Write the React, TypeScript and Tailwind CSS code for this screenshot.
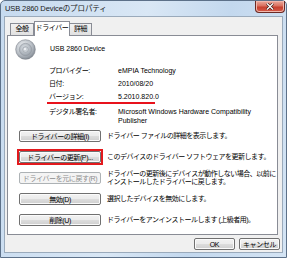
import React from 'react';

const font = "font-['Liberation_Sans','Noto_Sans_CJK_JP',sans-serif]";

const Button = ({
  children,
  width = 'w-[82px]',
  disabled = false,
}: {
  children: React.ReactNode;
  width?: string;
  disabled?: boolean;
}) => (
  <div
    className={`h-[12px] ${width} shrink-0 flex items-center justify-center rounded-[2px] border text-[7px] leading-none tracking-[-0.4px] ${
      disabled
        ? 'border-[#adb2b5] bg-[#f4f4f4] text-[#8d8d8d]'
        : 'border-[#707070] bg-[linear-gradient(#f2f2f2_0%,#ebebeb_50%,#dddddd_51%,#cfcfcf_100%)] text-black shadow-[inset_0_0_0_1px_#fbfbfb]'
    }`}
  >
    {children}
  </div>
);

const DeviceIcon = () => (
  <svg width="21" height="21" viewBox="0 0 21 21">
    <defs>
      <radialGradient id="g1" cx="40%" cy="35%" r="70%">
        <stop offset="0" stopColor="#f4f6f8" />
        <stop offset="0.6" stopColor="#b9bfc6" />
        <stop offset="1" stopColor="#7d858e" />
      </radialGradient>
      <radialGradient id="g2" cx="45%" cy="40%" r="60%">
        <stop offset="0" stopColor="#e9edf1" />
        <stop offset="1" stopColor="#98a0a9" />
      </radialGradient>
    </defs>
    <circle cx="10.5" cy="10.5" r="9.8" fill="url(#g1)" stroke="#7a8088" strokeWidth="0.6" />
    <circle cx="10.5" cy="10.5" r="6.2" fill="url(#g2)" stroke="#8c939b" strokeWidth="0.5" />
    <circle cx="10.5" cy="10.5" r="2.9" fill="#c9cfd5" stroke="#8a9098" strokeWidth="0.5" />
    <circle cx="10" cy="10" r="1" fill="#f7f9fb" />
  </svg>
);

const InfoRow = ({ label, children, underline = false }: { label: string; children: React.ReactNode; underline?: boolean }) => (
  <div className="relative flex h-[13px] items-center">
    <div className="w-[69px] shrink-0 tracking-[-0.4px]">{label}</div>
    <div>{children}</div>
    {underline && <div className="absolute left-[-2px] top-[11px] h-[1.5px] w-[108px] bg-[#e8121c]" />}
  </div>
);

const ActionRow = ({
  button,
  children,
  disabled = false,
  highlight = false,
}: {
  button: string;
  children: React.ReactNode;
  disabled?: boolean;
  highlight?: boolean;
}) => (
  <div className="flex h-[12px] items-center">
    <div className="relative">
      <Button disabled={disabled}>{button}</Button>
      {highlight && <div className="absolute -inset-[2px] border-2 border-[#e3191d]" />}
    </div>
    <div className="ml-[6px] leading-[8px] tracking-[-0.5px]">{children}</div>
  </div>
);

export default function App() {
  return (
    <div
      className={`${font} flex h-[258px] w-[287px] flex-col rounded-t-[5px] border border-[#5d7189] bg-[linear-gradient(100deg,#c6daef_0%,#d9e7f5_45%,#c3d8ee_70%,#d4e4f4_100%)] text-[7px] text-black`}
    >
      {/* title bar */}
      <div className="flex h-[15px] shrink-0 items-start justify-between">
        <div className="pl-[4px] pt-[4px] text-[7.5px] leading-none tracking-[-0.1px] text-[#1a1a1a]">
          USB 2860 Deviceのプロパティ
        </div>
        <div className="mr-[1px] flex h-[12px] w-[30px] items-center justify-center rounded-b-[4px] border border-t-0 border-[#6b2a24] bg-[linear-gradient(#eba99c_0%,#d9705f_45%,#c7402f_55%,#d55b4a_100%)] shadow-[inset_0_0_0_1px_#f1b8ad]">
          <svg width="8" height="7" viewBox="0 0 8 7">
            <path d="M1 0.5 L7 6.5 M7 0.5 L1 6.5" stroke="#3a1a16" strokeWidth="2.6" />
            <path d="M1 0.5 L7 6.5 M7 0.5 L1 6.5" stroke="#ffffff" strokeWidth="1.4" />
          </svg>
        </div>
      </div>

      {/* client area */}
      <div className="mx-[3px] mb-[4px] flex flex-1 flex-col border border-[#9aaabb] bg-[#f0f0f0] pl-[2px] pr-[4px] pt-[4px]">
        {/* tabs */}
        <div className="flex h-[14px] items-end pl-[3px]">
          <div className="flex h-[12px] w-[24px] items-center justify-center border border-b-0 border-[#898c95] bg-[linear-gradient(#f2f2f2,#e1e1e1)] tracking-[-0.4px]">
            全般
          </div>
          <div className="relative z-10 -mb-px flex h-[15px] w-[36px] items-center justify-center border border-b-0 border-[#898c95] bg-white pb-px tracking-[-0.4px]">
            ドライバー
          </div>
          <div className="flex h-[12px] w-[22px] items-center justify-center border border-b-0 border-l-0 border-[#898c95] bg-[linear-gradient(#f2f2f2,#e1e1e1)] tracking-[-0.4px]">
            詳細
          </div>
        </div>

        {/* panel */}
        <div className="flex h-[200px] flex-col border border-[#898c95] bg-white pl-[10px]">
          <div className="mt-[3px] flex items-center">
            <div className="-ml-[3px]">
              <DeviceIcon />
            </div>
            <div className="ml-[14px]">USB 2860 Device</div>
          </div>

          <div className="ml-[31px] mt-[5px] flex flex-col">
            <InfoRow label="プロバイダー:">eMPIA Technology</InfoRow>
            <InfoRow label="日付:">2010/08/20</InfoRow>
            <InfoRow label="バージョン:" underline>
              5.2010.820.0
            </InfoRow>
            <div className="flex pt-[3px]">
              <div className="w-[69px] shrink-0 leading-[9px] tracking-[-0.4px]">デジタル署名者:</div>
              <div className="leading-[9px]">
                Microsoft Windows Hardware Compatibility
                <br />
                Publisher
              </div>
            </div>
          </div>

          <div className="ml-[1px] mt-[5px] flex flex-col gap-[9px]">
            <ActionRow button="ドライバーの詳細(I)">ドライバー ファイルの詳細を表示します。</ActionRow>
            <ActionRow button="ドライバーの更新(P)..." highlight>
              このデバイスのドライバー ソフトウェアを更新します。
            </ActionRow>
            <ActionRow button="ドライバーを元に戻す(R)" disabled>
              ドライバーの更新後にデバイスが動作しない場合、以前に
              <br />
              インストールしたドライバーに戻します。
            </ActionRow>
            <ActionRow button="無効(D)">選択したデバイスを無効にします。</ActionRow>
            <ActionRow button="削除(U)">ドライバーをアンインストールします (上級者用)。</ActionRow>
          </div>
        </div>

        {/* dialog buttons */}
        <div className="-mr-[2px] mt-[3px] flex justify-end gap-[4px]">
          <Button width="w-[41px]">OK</Button>
          <Button width="w-[41px]">キャンセル</Button>
        </div>
      </div>
    </div>
  );
}
